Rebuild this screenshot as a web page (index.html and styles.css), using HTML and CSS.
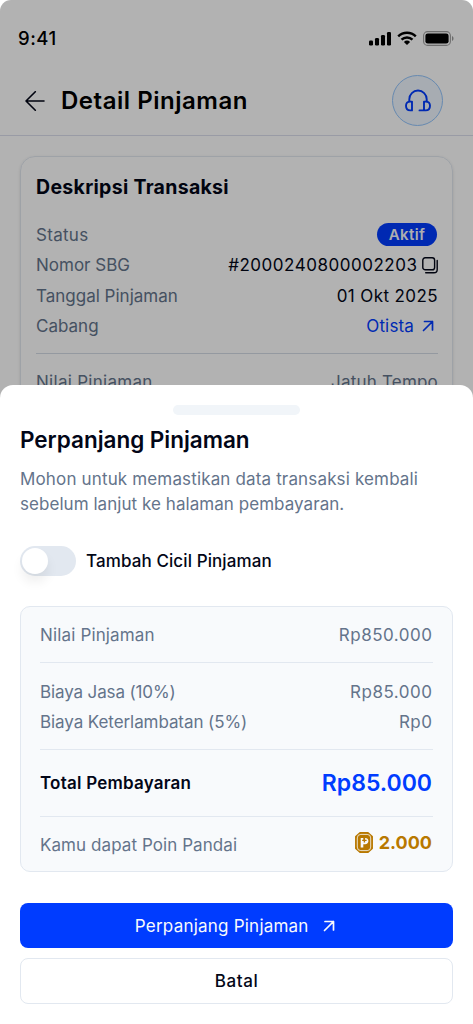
FILE: index.html
```html
<!DOCTYPE html>
<html lang="id">
<head>
<meta charset="utf-8">
<meta name="viewport" content="width=device-width, initial-scale=1">
<title>Detail Pinjaman</title>
<link rel="stylesheet" href="styles.css">
</head>
<body>
<div class="phone">
  <main class="page">
    <div class="status-bar">
      <span class="clock">9:41</span>
      <div class="status-icons">
        <svg width="22" height="15" viewBox="0 0 22 15"><rect x="0" y="9.5" width="4" height="5" rx="1.2"/><rect x="6" y="7" width="4" height="7.5" rx="1.2"/><rect x="12" y="4" width="4" height="10.5" rx="1.2"/><rect x="18" y="1" width="4" height="13.5" rx="1.2"/></svg>
        <svg width="20" height="15" viewBox="0 0 20 15"><g fill="none" stroke="#000" stroke-width="2.4"><path d="M1.2 5.3a12.6 12.6 0 0 1 17.6 0"/><path d="M4.5 8.7a7.9 7.9 0 0 1 11 0"/></g><path d="M10 14 6.9 10.9a4.5 4.5 0 0 1 6.2 0Z"/></svg>
        <svg width="31" height="15" viewBox="0 0 31 15"><rect x=".6" y=".6" width="26.8" height="13.8" rx="4" fill="none" stroke="#000" stroke-opacity=".38" stroke-width="1.1"/><rect x="2.4" y="2.4" width="23.2" height="10.2" rx="2.4"/><path d="M29 5v5c1-.4 1.5-1.3 1.5-2.5S30 5.400 29 5Z" opacity=".4"/></svg>
      </div>
    </div>
    <header class="header">
      <svg class="back" width="20" height="20" viewBox="0 0 20 20"><path d="M19 10H1M10.300.7 1 10l9.300 9.300"/></svg>
      <h1 class="header-title">Detail Pinjaman</h1>
      <button class="support" aria-label="Bantuan">
        <svg width="26" height="24" viewBox="0 0 26 24"><path d="M4.300 12.200V10.200a8.700 8.700 0 0 1 17.400 0v2.400M7 12.600H5.300C2.500 12.600 1 14.300 1 16.800s1.500 4.600 4.300 4.600H7Zm12 0h1.700c2.800 0 4.300 1.700 4.300 4.200s-1.500 4.600-4.300 4.600H19Zm.500 8.800H14.500"/></svg>
      </button>
    </header>
    <section class="card">
      <h2 class="card-title">Deskripsi Transaksi</h2>
      <dl class="details">
        <div class="row"><dt class="t-status">Status</dt><dd class="badge">Aktif</dd></div>
        <div class="row"><dt class="t-nomor">Nomor SBG</dt><dd class="with-icon"><span class="t-sbg">#2000240800002203</span><svg class="copy" width="16" height="17" viewBox="0 0 16 17"><rect x=".8" y=".8" width="11.800" height="12" rx="2.400"/><path d="M15.200 3.500v9a3.300 3.300 0 0 1-3.300 3.300H3.700"/></svg></dd></div>
        <div class="row"><dt class="t-tanggal">Tanggal Pinjaman</dt><dd class="t-date">01 Okt 2025</dd></div>
        <div class="row"><dt class="t-cabang">Cabang</dt><dd class="with-icon link"><span class="t-otista">Otista</span><svg class="go" width="12" height="12" viewBox="0 0 12 12"><path d="M1.500 10.500 10.500 1.500M2.500 1.500h8v8.500"/></svg></dd></div>
      </dl>
      <div class="row next"><span class="t-next">Nilai Pinjaman</span><span class="t-jatuh">Jatuh Tempo</span></div>
    </section>
  </main>
  <div class="scrim"></div>
  <section class="sheet" role="dialog" aria-label="Perpanjang Pinjaman">
    <div class="handle"></div>
    <h2 class="sheet-title">Perpanjang Pinjaman</h2>
    <p class="sheet-text"><span class="t-desc1">Mohon untuk memastikan data transaksi kembali</span><br><span class="t-desc2">sebelum lanjut ke halaman pembayaran.</span></p>
    <label class="toggle-row"><span class="toggle"><span class="thumb"></span></span><span class="toggle-label">Tambah Cicil Pinjaman</span></label>
    <div class="summary">
      <div class="line first"><span class="t-nilai">Nilai Pinjaman</span><span class="amount">Rp850.000</span></div>
      <div class="fees">
        <div class="line"><span class="t-jasa">Biaya Jasa (10%)</span><span class="amount">Rp85.000</span></div>
        <div class="line"><span class="t-telat">Biaya Keterlambatan (5%)</span><span class="amount">Rp0</span></div>
      </div>
      <div class="line total"><span class="total-label">Total Pembayaran</span><span class="total-value">Rp85.000</span></div>
      <div class="line points"><span class="t-kamu">Kamu dapat Poin Pandai</span><span class="points-value">
        <svg width="18" height="21" viewBox="0 0 18 21"><path d="M5 .8h8l4.200 3.700v12L13 20.200H5L.8 16.500v-12Z" fill="#b87800" stroke="#b87800" stroke-width="1.500" stroke-linejoin="round"/><rect x="2.300" y="2.400" width="13.400" height="16.200" rx="3.500" fill="none" stroke="#f8fafc" stroke-width=".8"/><path d="M5.700 6h2.600v1.700H7.200v1.400h1.500v1.500h1.400V9.100h1.500V7.700h-1.500V6c2.100 0 3.300 1.200 3.300 3.100s-1.300 3.200-3.300 3.200H8.300v3.200H5.700Z" fill="#f8fafc"/></svg>
        <span class="points-num">2.000</span></span></div>
    </div>
    <div class="actions">
      <button class="btn primary"><span class="t-primary">Perpanjang Pinjaman</span><svg class="go" width="12" height="12" viewBox="0 0 12 12"><path d="M1.500 10.500 10.500 1.500M2 1.500h8.500V10"/></svg></button>
      <button class="btn secondary"><span class="t-batal">Batal</span></button>
    </div>
  </section>
</div>
</body>
</html>
```
FILE: styles.css
```css
* { box-sizing: border-box; }
body { margin: 0; background: #fff; font-family: Inter, "Liberation Sans", sans-serif; font-size: 17px; color: #020617; }
h1, h2, p, dl, dd { margin: 0; }
svg { display: block; flex: none; }
button { font: inherit; padding: 0; }
.phone { position: relative; width: 473px; height: 1024px; overflow: hidden; border-radius: 11px 11px 0 0; }
.page { height: 100%; background: #fff; }
.status-bar { display: flex; justify-content: space-between; align-items: center; height: 76px; padding: 0 19px 0 18px; }
.clock { font-size: 18.500px; font-weight: 500; letter-spacing: .5px; color: #000; }
.status-icons { display: flex; gap: 6px; }
.header { display: flex; align-items: center; height: 60px; padding: 0 30px 10px 25px; border-bottom: 1px solid #dbdfec; }
.back { fill: none; stroke: #020617; stroke-width: 1.600; stroke-linecap: round; stroke-linejoin: round; }
.header-title { margin-left: 16px; font-size: 24px; font-weight: 600; letter-spacing: .53px; color: #000; }
.support { display: flex; align-items: center; justify-content: center; width: 51px; height: 51px; margin-left: auto; border: 1px solid #93c5fd; border-radius: 50%; background: #eff6ff; flex: none; }
.support svg { fill: none; stroke: #003cff; stroke-width: 1.900; stroke-linecap: round; stroke-linejoin: round; }
.card { height: 300px; margin: 20px 20px 0; padding: 15px 14px 16px 15px; border: 1px solid #e2e8f0; border-radius: 15px; box-shadow: 0 1px 3px rgba(0,0,0,.12); }
.card-title { font-size: 19.500px; line-height: 30px; font-weight: 700; letter-spacing: .3px; }
.details { margin-top: 18px; padding-bottom: 12px; border-bottom: 1px solid #d5dce6; }
.row { display: flex; justify-content: space-between; align-items: center; height: 30.300px; white-space: nowrap; }
.row dt, .next { color: #64748b; }
.badge { display: flex; align-items: center; justify-content: center; width: 60px; height: 23px; margin: 0 1px 1px 0; border-radius: 12px; background: #003cff; color: #f8fafc; font-size: 15px; font-weight: 600; letter-spacing: .4px; }
.with-icon { display: flex; align-items: center; gap: 4.500px; }
.copy { fill: none; stroke: #020617; stroke-width: 1.400; stroke-linecap: round; }
.link { gap: 8px; padding-right: 4px; color: #003cff; }
.go { fill: none; stroke: currentColor; stroke-width: 1.700; stroke-linecap: round; stroke-linejoin: round; }
.next { margin-top: 13px; }
.t-status { letter-spacing: .3px; }
.t-sbg { letter-spacing: .52px; }
.t-date { letter-spacing: .4px; }
.t-otista { letter-spacing: .15px; }
.t-next { letter-spacing: .28px; }
.t-jatuh { letter-spacing: .2px; }
.scrim { position: absolute; inset: 0; background: rgba(0,0,0,.3); }
.sheet { position: absolute; left: 0; right: 0; bottom: 0; height: 639.500px; padding: 20px 20px 0; border-radius: 13px 13px 0 0; background: #fff; }
.handle { width: 127px; height: 10px; margin: 0 auto; border-radius: 5px; background: #f1f5f9; }
.sheet-title { margin-top: 10px; font-size: 22.500px; line-height: 30px; font-weight: 600; letter-spacing: -.02px; }
.sheet-text { margin-top: 12px; line-height: 25.300px; color: #64748b; white-space: nowrap; }
.t-desc1 { letter-spacing: .15px; }
.t-desc2 { letter-spacing: .05px; }
.toggle-row { display: flex; align-items: center; gap: 10px; height: 30px; margin-top: 28.800px; }
.toggle { display: flex; align-items: center; width: 56px; height: 30px; padding: 2px; border-radius: 15px; background: #e2e8f0; }
.thumb { width: 26px; height: 26px; border-radius: 50%; background: #fff; box-shadow: 0 8px 12px rgba(0,0,0,.07); }
.toggle-label { font-weight: 500; letter-spacing: .1px; }
.summary { height: 266px; margin-top: 30px; padding: 0 19px; border: 1px solid #e2e8f0; border-radius: 10px; background: #f8fafc; color: #64748b; }
.line { display: flex; justify-content: space-between; align-items: center; height: 30px; white-space: nowrap; }
.summary .first { height: 56px; padding-top: 1px; border-bottom: 1px solid #e2e8f0; }
.fees { height: 87px; padding-top: 14px; border-bottom: 1px solid #e2e8f0; }
.amount { margin-right: .5px; letter-spacing: .5px; }
.t-nilai { letter-spacing: .15px; }
.t-jasa { letter-spacing: -.13px; }
.t-telat { letter-spacing: -.08px; }
.t-kamu { letter-spacing: .07px; }
.summary .total { height: 67px; border-bottom: 1px solid #e2e8f0; color: #020617; }
.total-label { font-weight: 600; letter-spacing: .22px; }
.total-value { margin-right: 1px; font-size: 23px; font-weight: 600; color: #003cff; }
.summary .points { height: 56px; }
.points-value { display: flex; align-items: center; gap: 6px; margin-right: 1px; padding-bottom: 5px; color: #b87800; }
.points-num { font-size: 18px; font-weight: 700; }
.actions { display: grid; gap: 10px; margin-top: 30.700px; }
.btn { display: flex; align-items: center; justify-content: center; height: 45.500px; border: 0; border-radius: 8px; }
.primary { gap: 14.500px; padding: 1px 3px 0 0; background: #003cff; color: #f8fafc; }
.t-primary { letter-spacing: .22px; }
.secondary { border: 1px solid #e2e8f0; background: #fff; color: #020617; font-weight: 500; }
.t-batal { letter-spacing: .6px; }
```
